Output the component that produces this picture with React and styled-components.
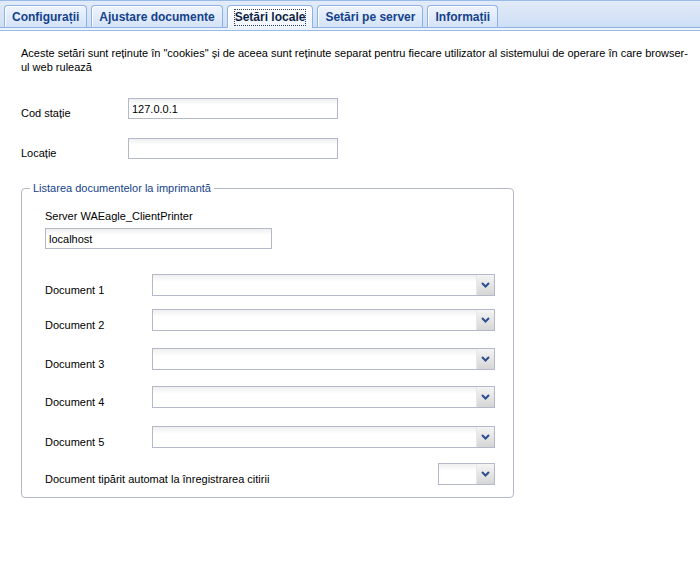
import styled, { createGlobalStyle } from "styled-components"
import React from "react"

const GlobalStyle = createGlobalStyle`
body {
    margin: 0;
    background: #fff;
    font-family: "Liberation Sans", Arial, sans-serif;
    font-size: 11px;
    color: #000;
}
`

const tabs = ['Configurații', 'Ajustare documente', 'Setări locale', 'Setări pe server', 'Informații']

const documente = [
    { nume: 'Document 1', sus: 25 },
    { nume: 'Document 2', sus: 13 },
    { nume: 'Document 3', sus: 17 },
    { nume: 'Document 4', sus: 16 },
    { nume: 'Document 5', sus: 18 },
]

function Sageata() {
    return (
        <svg width="9" height="6" viewBox="0 0 9 6">
            <polyline points="1,1 4.5,4.5 8,1" fill="none" stroke="#2d4f8e" strokeWidth="2" />
        </svg>
    )
}

function Combo(props) {
    return (
        <ComboBox width={props.width}>
            <ComboInput />
            <Trigger><Sageata /></Trigger>
        </ComboBox>
    )
}

export default function App() {
    return (
        <Page>
            <GlobalStyle />
            <TabStrip>
                {tabs.map(t => (
                    <Tab key={t} active={t === 'Setări locale'}>
                        <span>{t}</span>
                    </Tab>
                ))}
            </TabStrip>
            <Spacer />
            <Body>
                <Intro>
                    Aceste setări sunt reținute în "cookies" și de aceea sunt reținute separat pentru fiecare utilizator al sistemului de operare în care browser-ul web rulează
                </Intro>
                <FieldRow top={24}>
                    <Label>Cod stație</Label>
                    <TextField width={210} defaultValue="127.0.0.1" />
                </FieldRow>
                <FieldRow top={19}>
                    <Label>Locație</Label>
                    <TextField width={210} />
                </FieldRow>
                <Grup>
                    <Legenda>Listarea documentelor la imprimantă</Legenda>
                    <StackLabel>Server WAEagle_ClientPrinter</StackLabel>
                    <TextField width={227} defaultValue="localhost" />
                    {documente.map(d => (
                        <FieldRow key={d.nume} top={d.sus}>
                            <Label doc>{d.nume}</Label>
                            <Combo width={343} />
                        </FieldRow>
                    ))}
                    <FieldRow top={15} spread>
                        <Label doc>Document tipărit automat la înregistrarea citirii</Label>
                        <Combo width={57} />
                    </FieldRow>
                </Grup>
            </Body>
        </Page>
    )
}

const Page = styled.div`
width: 700px;
min-height: 578px;
`

const TabStrip = styled.div`
display: flex;
gap: 4px;
height: 22px;
padding: 4px 0 0 4px;
border-top: 1px solid #99bbe8;
border-bottom: 1px solid #8db2e3;
background: linear-gradient(#e2ebf8, #cedff5);
`

const Tab = styled.div`
display: flex;
align-items: center;
height: ${props => props.active ? '23px' : '22px'};
padding: 1px 7px 0 7px;
box-sizing: border-box;
border: 1px solid #8db2e3;
border-bottom: none;
border-radius: 4px 4px 0 0;
background: ${props => props.active ? 'linear-gradient(#ffffff, #eef4fd)' : 'linear-gradient(#eef4fd, #d4e3f7)'};
color: ${props => props.active ? '#0f1f45' : '#15428b'};
font-size: 12px;
font-weight: 700;
white-space: nowrap;
box-shadow: inset 1px 1px 0 #fff;

span {
    outline: ${props => props.active ? '1px dotted #33406a' : 'none'};
    line-height: 15px;
}
`

const Spacer = styled.div`
height: 2px;
background: #edf3fd;
border-bottom: 1px solid #99bbe8;
`

const Body = styled.div`
padding: 15px 21px 40px;
`

const Intro = styled.div`
width: 668px;
line-height: 14px;
`

const FieldRow = styled.div`
display: flex;
align-items: flex-start;
justify-content: ${props => props.spread ? 'space-between' : 'flex-start'};
margin-top: ${props => props.top}px;
`

const Label = styled.div`
width: ${props => props.doc ? 'auto' : '107px'};
min-width: 107px;
padding-top: ${props => props.doc ? '10px' : '9px'};
line-height: 12px;
`

const StackLabel = styled.div`
margin-top: 14px;
line-height: 14px;
margin-bottom: 5px;
`

const TextField = styled.input`
width: ${props => props.width}px;
height: 21px;
box-sizing: border-box;
border: 1px solid #b5b8c8;
padding: 0 3px;
background: linear-gradient(#efefef, #ffffff 6px);
font-family: "Liberation Sans", Arial, sans-serif;
font-size: 11px;
color: #000;
outline: none;
`

const Grup = styled.fieldset`
width: 492px;
box-sizing: border-box;
margin: 22px 0 0;
padding: 0 18px 12px 23px;
border: 1px solid #b5b8c8;
border-radius: 4px;
`

const Legenda = styled.legend`
margin-left: -15px;
padding: 0 3px;
color: #15428b;
font-size: 11px;
line-height: 14px;
`

const ComboBox = styled.div`
display: flex;
width: ${props => props.width}px;
height: 22px;
box-sizing: border-box;
border: 1px solid #b5b8c8;
`

const ComboInput = styled.div`
flex: 1;
background: linear-gradient(#efefef, #ffffff 7px);
`

const Trigger = styled.div`
width: 17px;
display: flex;
align-items: center;
justify-content: center;
border-left: 1px solid #e8e8e8;
background: linear-gradient(#f4f4f4, #d6d6d6);
`
